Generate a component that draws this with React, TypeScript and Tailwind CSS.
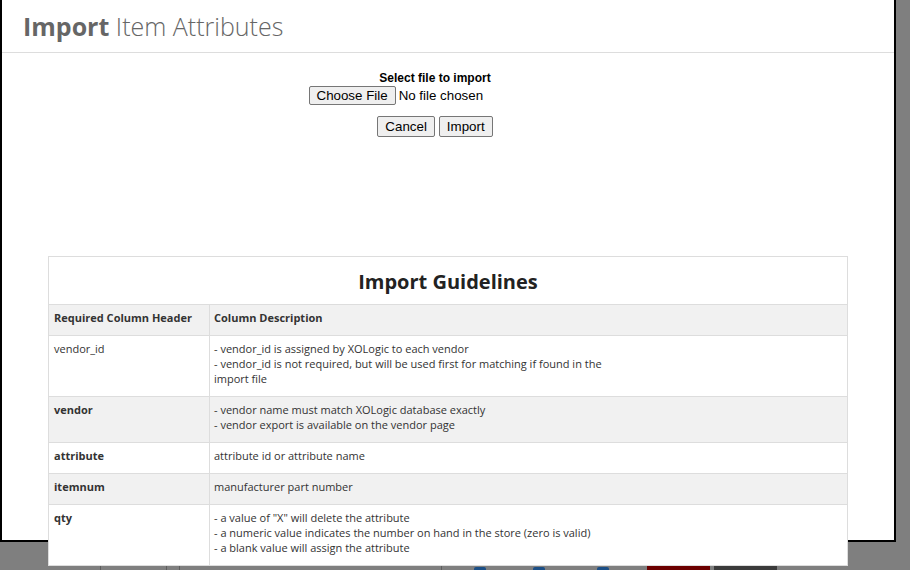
import React from "react";

const rows: { name: string; bold: boolean; bg: string; lines: string[] }[] = [
  {
    name: "vendor_id",
    bold: false,
    bg: "bg-white",
    lines: [
      "- vendor_id is assigned by XOLogic to each vendor",
      "- vendor_id is not required, but will be used first for matching if found in the",
      "import file",
    ],
  },
  {
    name: "vendor",
    bold: true,
    bg: "bg-[#f1f1f1]",
    lines: [
      "- vendor name must match XOLogic database exactly",
      "- vendor export is available on the vendor page",
    ],
  },
  { name: "attribute", bold: true, bg: "bg-white", lines: ["attribute id or attribute name"] },
  { name: "itemnum", bold: true, bg: "bg-[#f1f1f1]", lines: ["manufacturer part number"] },
  {
    name: "qty",
    bold: true,
    bg: "bg-white",
    lines: [
      '- a value of "X" will delete the attribute',
      "- a numeric value indicates the number on hand in the store (zero is valid)",
      "- a blank value will assign the attribute",
    ],
  },
];

function NativeButton({ children, h }: { children: React.ReactNode; h: string }) {
  return (
    <button
      className={`${h} px-[7px] border border-[#767676] rounded-[2px] bg-[#efefef] text-[13.33px] leading-[15px] text-black`}
      style={{ fontFamily: '"Liberation Sans", Arial, sans-serif' }}
    >
      {children}
    </button>
  );
}

export default function App() {
  return (
    <div className="relative h-[570px] w-[910px] overflow-hidden bg-[#7f7f7f]">
      {/* background page (dimmed) */}
      <div className="pt-[566px] flex items-start h-[570px]">
        <div className="w-[100px] h-[20px]" />
        <div className="w-[66px] h-[20px] border-l border-[#5e5e5e]" />
        <div className="w-[13px] h-[20px] border-l border-[#5e5e5e]" />
        <div className="w-[262px] h-[20px] border-l border-[#5e5e5e]" />
        <div className="h-[20px] border-l border-[#5e5e5e] flex items-start">
          <div className="ml-[32px] mt-[1px] w-[12px] h-[12px] rounded-[2px] bg-[#1c4f86]" />
          <div className="ml-[47px] mt-[1px] w-[12px] h-[12px] rounded-[2px] bg-[#1c4f86]" />
          <div className="ml-[52px] mt-[1px] w-[12px] h-[12px] rounded-[2px] bg-[#1c4f86]" />
          <div
            className="ml-[38px] w-[63px] h-[20px] bg-[#6c0000] text-[#8c6a6a] text-[13px] leading-[20px] text-center"
            style={{ fontFamily: '"Open Sans", sans-serif' }}
          >
            Delete
          </div>
          <div
            className="ml-[4px] w-[63px] h-[20px] bg-[#3b3b3b] text-[#7a7a7a] text-[13px] leading-[20px] text-center"
            style={{ fontFamily: '"Open Sans", sans-serif' }}
          >
            Export
          </div>
        </div>
      </div>

      {/* modal */}
      <div className="absolute left-0 top-[-2px] w-[896px] h-[544px] border-2 border-black bg-white">
        <div
          className="h-[53px] border-b border-[#dddddd] pl-[21px] pt-[9px]"
          style={{ fontFamily: '"Open Sans", sans-serif' }}
        >
          <span className="text-[25px] leading-[34px] text-[#666666]">
            <span className="font-bold">Import</span>{" "}
            <span className="font-light">Item Attributes</span>
          </span>
        </div>

        <div
          className="flex flex-col items-center mr-[26px]"
          style={{ fontFamily: '"Liberation Sans", Arial, sans-serif' }}
        >
          <div className="mt-[19px] text-[12px] leading-[13px] font-bold text-black">
            Select file to import
          </div>
          <div className="mt-[1px] w-[253px] flex items-center gap-[3px]">
            <NativeButton h="h-[19px]">Choose File</NativeButton>
            <span className="text-[13.33px] leading-[15px] text-black">No file chosen</span>
          </div>
          <div className="mt-[11px] flex gap-[4px]">
            <NativeButton h="h-[21px]">Cancel</NativeButton>
            <NativeButton h="h-[21px]">Import</NativeButton>
          </div>
        </div>

        <table
          className="mx-auto mt-[119px] w-[800px] border-collapse bg-white text-[#333333]"
          style={{ fontFamily: '"Open Sans", sans-serif' }}
        >
          <thead>
            <tr>
              <th
                colSpan={2}
                className="border border-[#dddddd] pt-[11px] pb-[9px] text-[20px] leading-[27px] font-bold text-[#222222] text-center"
              >
                Import Guidelines
              </th>
            </tr>
            <tr className="bg-[#f1f1f1]">
              <th className="w-[161px] border border-[#dddddd] px-[5px] pt-[5px] pb-[10px] text-[11px] leading-[15px] font-bold text-left">
                Required Column Header
              </th>
              <th className="border border-[#dddddd] px-[4px] pt-[5px] pb-[10px] text-[11px] leading-[15px] font-bold text-left">
                Column Description
              </th>
            </tr>
          </thead>
          <tbody>
            {rows.map((r) => (
              <tr key={r.name} className={r.bg}>
                <td
                  className={`align-top border border-[#dddddd] px-[5px] pt-[5px] pb-[10px] text-[11px] leading-[15px] ${
                    r.bold ? "font-bold" : "font-normal"
                  }`}
                >
                  {r.name}
                </td>
                <td className="align-top border border-[#dddddd] px-[4px] pt-[5px] pb-[10px] text-[11px] leading-[15px]">
                  {r.lines.map((l, i) => (
                    <div key={i}>{l}</div>
                  ))}
                </td>
              </tr>
            ))}
          </tbody>
        </table>
      </div>
    </div>
  );
}
